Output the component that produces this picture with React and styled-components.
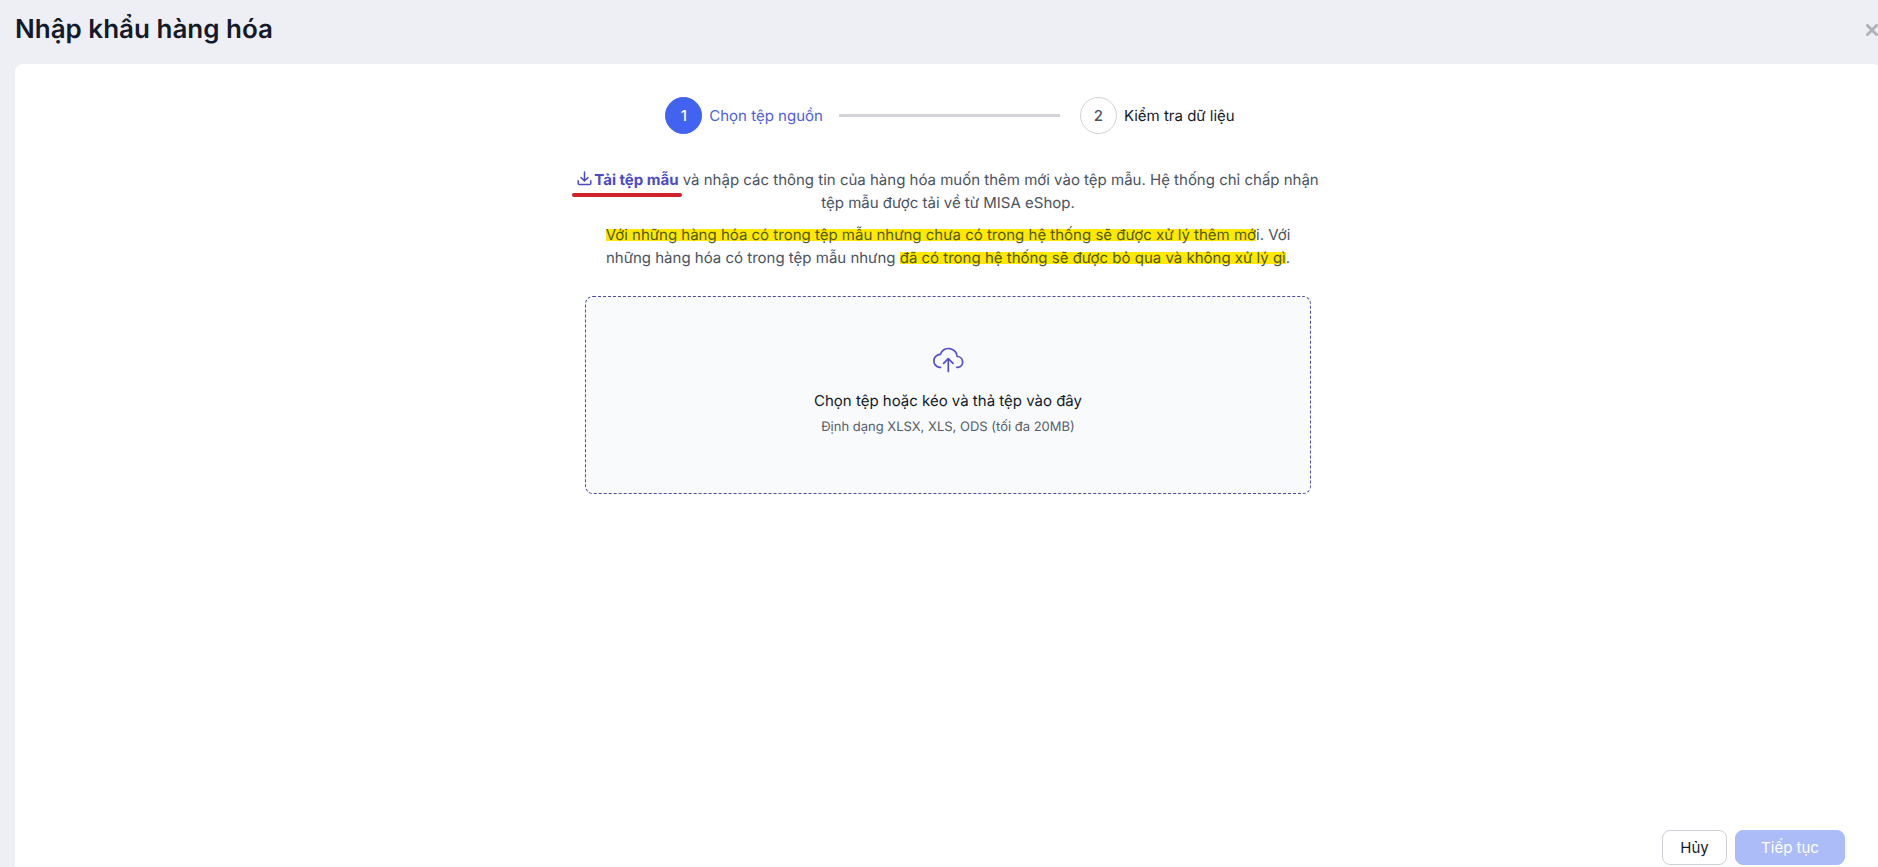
import React from "react";
import styled, { createGlobalStyle } from "styled-components";

const GlobalStyle = createGlobalStyle`
  *, *::before, *::after { box-sizing: border-box; }
  body {
    margin: 0;
    background: #eeeff4;
    color: #141a2a;
    font-family: Inter, "Noto Sans", sans-serif;
    font-size: 15px;
    line-height: 23px;
    text-rendering: geometricPrecision;
    overflow-x: hidden;
  }
  button { font: inherit; }
`;

const Page = styled.div`
  display: flex;
  flex-direction: column;
  min-height: 100vh;
  padding-left: 15px;
  margin-right: -3px;
`;

const Header = styled.header`
  display: flex;
  align-items: center;
  justify-content: space-between;
  height: 64px;
  padding-bottom: 5px;
`;

const Title = styled.h1`
  margin: 0;
  font-size: 26px;
  line-height: 32px;
  font-weight: 600;
`;

const CloseButton = styled.button`
  display: flex;
  padding: 0;
  border: 0;
  background: none;
  color: #b0b2b5;
  cursor: pointer;
`;

const Panel = styled.main`
  flex: 1;
  display: flex;
  flex-direction: column;
  align-items: center;
  padding: 33px 36px 2px;
  border-radius: 8px 8px 0 0;
  background: #fff;
`;

const Steps = styled.ol`
  display: flex;
  align-items: center;
  margin: 0 0 34px;
  padding: 0 0 0 4px;
  list-style: none;
`;

const Step = styled.li`
  display: flex;
  align-items: center;
  gap: 7px;
  color: ${(p) => (p.$active ? "#5060dc" : "#141a2a")};
`;

const StepNumber = styled.span`
  display: grid;
  place-items: center;
  width: 37px;
  height: 37px;
  border: 1px solid ${(p) => (p.$active ? "#4262f0" : "#cfd1d8")};
  border-radius: 50%;
  background: ${(p) => (p.$active ? "#4262f0" : "#fff")};
  color: ${(p) => (p.$active ? "#fff" : "#4b5361")};
  font-size: 15px;
  font-weight: 500;
`;

const StepLine = styled.li`
  width: 221px;
  height: 3px;
  margin: 0 20px 0 16px;
  background: #d2d4da;
`;

const Note = styled.p`
  max-width: ${(p) => p.$width}px;
  margin: 0 0 9px;
  color: #4b5361;
  text-align: center;
`;

const TemplateLink = styled.a`
  position: relative;
  color: #4d4bc4;
  font-weight: 700;
  text-decoration: none;

  svg {
    margin-right: 2px;
    vertical-align: -1px;
  }

  &::after {
    content: "";
    position: absolute;
    left: -5px;
    right: -3px;
    bottom: -8px;
    height: 4px;
    border-radius: 2px;
    background: #cf2329;
  }
`;

const Highlight = styled.mark`
  color: #51590f;
  background: linear-gradient(#ffe900, #ffe900) 0 4px / 100% 12px no-repeat;
`;

const DropZone = styled.label`
  display: flex;
  flex-direction: column;
  align-items: center;
  width: 726px;
  max-width: 100%;
  margin-top: 18px;
  padding: 48px 20px 54px;
  border: 1px dashed #4f4a9c;
  border-radius: 8px;
  background: #f9fafc;
  cursor: pointer;
`;

const FileInput = styled.input`
  position: absolute;
  opacity: 0;
  pointer-events: none;
`;

const DropTitle = styled.span`
  margin-top: 16px;
`;

const DropHint = styled.span`
  margin-top: 4px;
  color: #555d68;
  font-size: 13px;
`;

const Footer = styled.footer`
  display: flex;
  align-self: stretch;
  justify-content: flex-end;
  gap: 8px;
  margin-top: auto;
`;

const Button = styled.button`
  min-width: ${(p) => (p.$primary ? 110 : 65)}px;
  height: 35px;
  padding: 0 16px;
  border: 1px solid ${(p) => (p.$primary ? "#abbcf8" : "#cdcfd6")};
  border-radius: 8px;
  background: ${(p) => (p.$primary ? "#abbcf8" : "#fff")};
  color: ${(p) => (p.$primary ? "#fff" : "#141a2a")};
`;

const CloseIcon = () => (
  <svg width="15" height="12" viewBox="0 0 15 12" fill="none" stroke="currentColor" strokeWidth="3" strokeLinecap="round" aria-hidden="true">
    <path d="M1.5 1.5l9 9M10.5 1.5l-9 9" />
  </svg>
);

const DownloadIcon = () => (
  <svg width="15" height="15" viewBox="0 0 15 15" fill="none" stroke="currentColor" strokeWidth="1.5" strokeLinecap="round" strokeLinejoin="round" aria-hidden="true">
    <path d="M7.5 1v8.5M4 6.5l3.5 3.4L11 6.5M1.2 9.8v2.4q0 1.4 1.4 1.4h9.8q1.4 0 1.4-1.4V9.8" />
  </svg>
);

const CloudUploadIcon = () => (
  <svg width="36" height="28" viewBox="0 0 36 28" fill="none" stroke="#5450c8" strokeWidth="1.7" strokeLinecap="round" strokeLinejoin="round" aria-hidden="true">
    <path d="M10.6 22.3H9.2A6.5 6.5 0 0 1 10.3 9.4A8.7 8.7 0 0 1 27.2 11.5A5.5 5.5 0 0 1 28.6 22.3H26.8" />
    <path d="M18.3 26.5V14M13.6 18.4l4.7-4.7 4.7 4.7" />
  </svg>
);

export default function App() {
  return (
    <>
      <GlobalStyle />
      <Page>
        <Header>
          <Title>Nhập khẩu hàng hóa</Title>
          <CloseButton type="button" aria-label="Đóng">
            <CloseIcon />
          </CloseButton>
        </Header>
        <Panel>
          <Steps>
            <Step $active aria-current="step">
              <StepNumber $active>1</StepNumber>
              <span>Chọn tệp nguồn</span>
            </Step>
            <StepLine aria-hidden="true" />
            <Step>
              <StepNumber>2</StepNumber>
              <span>Kiểm tra dữ liệu</span>
            </Step>
          </Steps>
          <Note $width={760}>
            <TemplateLink href="#template">
              <DownloadIcon />
              Tải tệp mẫu
            </TemplateLink>{" "}
            và nhập các thông tin của hàng hóa muốn thêm mới vào tệp mẫu. Hệ thống chỉ chấp nhận tệp mẫu
            được tải về từ MISA eShop.
          </Note>
          <Note $width={726}>
            <Highlight>
              Với những hàng hóa có trong tệp mẫu nhưng chưa có trong hệ thống sẽ được xử lý thêm mớ
            </Highlight>
            i. Với những hàng hóa có trong tệp mẫu nhưng{" "}
            <Highlight>đã có trong hệ thống sẽ được bỏ qua và không xử lý gì</Highlight>.
          </Note>
          <DropZone>
            <FileInput type="file" accept=".xlsx,.xls,.ods" />
            <CloudUploadIcon />
            <DropTitle>Chọn tệp hoặc kéo và thả tệp vào đây</DropTitle>
            <DropHint>Định dạng XLSX, XLS, ODS (tối đa 20MB)</DropHint>
          </DropZone>
          <Footer>
            <Button type="button">Hủy</Button>
            <Button type="button" $primary disabled>Tiếp tục</Button>
          </Footer>
        </Panel>
      </Page>
    </>
  );
}
